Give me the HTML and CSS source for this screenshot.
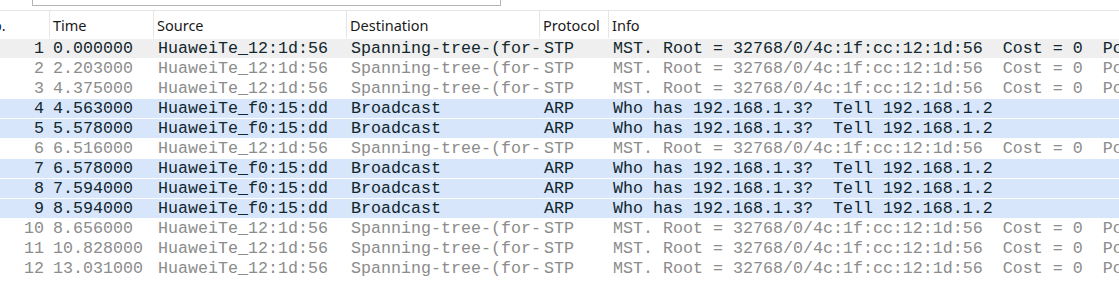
FILE: index.html
```html
<!DOCTYPE html>
<html lang="en">
<head>
    <meta charset="UTF-8">
    <meta name="viewport" content="width=device-width, initial-scale=1.0">
    <title>Packet List</title>
    <link rel="stylesheet" href="styles.css">
</head>
<body>
    <div class="toolbar">
        <div class="filter"></div>
    </div>

    <div class="packet-list">
        <div class="header">
            <div class="col no-head">No.</div>
            <div class="col">Time</div>
            <div class="col">Source</div>
            <div class="col">Destination</div>
            <div class="col">Protocol</div>
            <div class="col last">Info</div>
        </div>

        <div class="row current">
            <div class="cell num">1</div>
            <div class="cell time">0.000000</div>
            <div class="cell">HuaweiTe_12:1d:56</div>
            <div class="cell">Spanning-tree-(for-bridges)_00</div>
            <div class="cell">STP</div>
            <div class="cell">MST. Root = 32768/0/4c:1f:cc:12:1d:56  Cost = 0  Port = 0x8001</div>
        </div>
        <div class="row dim">
            <div class="cell num">2</div>
            <div class="cell time">2.203000</div>
            <div class="cell">HuaweiTe_12:1d:56</div>
            <div class="cell">Spanning-tree-(for-bridges)_00</div>
            <div class="cell">STP</div>
            <div class="cell">MST. Root = 32768/0/4c:1f:cc:12:1d:56  Cost = 0  Port = 0x8001</div>
        </div>
        <div class="row dim">
            <div class="cell num">3</div>
            <div class="cell time">4.375000</div>
            <div class="cell">HuaweiTe_12:1d:56</div>
            <div class="cell">Spanning-tree-(for-bridges)_00</div>
            <div class="cell">STP</div>
            <div class="cell">MST. Root = 32768/0/4c:1f:cc:12:1d:56  Cost = 0  Port = 0x8001</div>
        </div>
        <div class="row arp">
            <div class="cell num">4</div>
            <div class="cell time">4.563000</div>
            <div class="cell">HuaweiTe_f0:15:dd</div>
            <div class="cell">Broadcast</div>
            <div class="cell proto">ARP</div>
            <div class="cell">Who has 192.168.1.3?  Tell 192.168.1.2</div>
        </div>
        <div class="row arp">
            <div class="cell num">5</div>
            <div class="cell time">5.578000</div>
            <div class="cell">HuaweiTe_f0:15:dd</div>
            <div class="cell">Broadcast</div>
            <div class="cell proto">ARP</div>
            <div class="cell">Who has 192.168.1.3?  Tell 192.168.1.2</div>
        </div>
        <div class="row dim">
            <div class="cell num">6</div>
            <div class="cell time">6.516000</div>
            <div class="cell">HuaweiTe_12:1d:56</div>
            <div class="cell">Spanning-tree-(for-bridges)_00</div>
            <div class="cell">STP</div>
            <div class="cell">MST. Root = 32768/0/4c:1f:cc:12:1d:56  Cost = 0  Port = 0x8001</div>
        </div>
        <div class="row arp">
            <div class="cell num">7</div>
            <div class="cell time">6.578000</div>
            <div class="cell">HuaweiTe_f0:15:dd</div>
            <div class="cell">Broadcast</div>
            <div class="cell proto">ARP</div>
            <div class="cell">Who has 192.168.1.3?  Tell 192.168.1.2</div>
        </div>
        <div class="row arp">
            <div class="cell num">8</div>
            <div class="cell time">7.594000</div>
            <div class="cell">HuaweiTe_f0:15:dd</div>
            <div class="cell">Broadcast</div>
            <div class="cell proto">ARP</div>
            <div class="cell">Who has 192.168.1.3?  Tell 192.168.1.2</div>
        </div>
        <div class="row arp">
            <div class="cell num">9</div>
            <div class="cell time">8.594000</div>
            <div class="cell">HuaweiTe_f0:15:dd</div>
            <div class="cell">Broadcast</div>
            <div class="cell proto">ARP</div>
            <div class="cell">Who has 192.168.1.3?  Tell 192.168.1.2</div>
        </div>
        <div class="row dim">
            <div class="cell num">10</div>
            <div class="cell time">8.656000</div>
            <div class="cell">HuaweiTe_12:1d:56</div>
            <div class="cell">Spanning-tree-(for-bridges)_00</div>
            <div class="cell">STP</div>
            <div class="cell">MST. Root = 32768/0/4c:1f:cc:12:1d:56  Cost = 0  Port = 0x8001</div>
        </div>
        <div class="row dim">
            <div class="cell num">11</div>
            <div class="cell time">10.828000</div>
            <div class="cell">HuaweiTe_12:1d:56</div>
            <div class="cell">Spanning-tree-(for-bridges)_00</div>
            <div class="cell">STP</div>
            <div class="cell">MST. Root = 32768/0/4c:1f:cc:12:1d:56  Cost = 0  Port = 0x8001</div>
        </div>
        <div class="row dim">
            <div class="cell num">12</div>
            <div class="cell time">13.031000</div>
            <div class="cell">HuaweiTe_12:1d:56</div>
            <div class="cell">Spanning-tree-(for-bridges)_00</div>
            <div class="cell">STP</div>
            <div class="cell">MST. Root = 32768/0/4c:1f:cc:12:1d:56  Cost = 0  Port = 0x8001</div>
        </div>
    </div>
</body>
</html>
```

FILE: styles.css
```css
body {
    margin: 0;
    background-color: white;
    overflow: hidden;
}
.toolbar {
    height: 10px;
}
.filter {
    margin-left: 32px;
    width: 467px;
    height: 5px;
    border: 1px solid #b4b4b4;
    border-top: none;
}
.header,
.row {
    display: grid;
    grid-template-columns: 50px 104px 193px 193px 69px 1fr;
}
.header {
    height: 27px;
    border-top: 1px solid #e6e6e6;
    font-family: "Noto Sans", sans-serif;
    font-size: 14.5px;
    line-height: 28px;
    color: #1a1a1a;
}
.col {
    padding-left: 3px;
    border-right: 1px solid #e6e6e6;
    white-space: nowrap;
    overflow: hidden;
}
.col.last {
    border-right: none;
}
.no-head {
    text-indent: -21px;
}
.row {
    height: 19px;
    border-top: 1px solid white;
    font-family: "Liberation Mono", monospace;
    font-size: 16.67px;
    line-height: 19px;
    color: #12272e;
}
.cell {
    padding-left: 4px;
    white-space: pre;
    overflow: hidden;
}
.cell.num {
    padding-left: 0;
    padding-right: 6px;
    text-align: right;
}
.cell.time {
    padding-left: 3px;
}
.cell.proto {
    padding-left: 4px;
}
.row.current {
    background-color: #efefef;
}
.row.arp {
    background-color: #d7e6fb;
}
.row.dim {
    color: #8c8c8c;
}
```
